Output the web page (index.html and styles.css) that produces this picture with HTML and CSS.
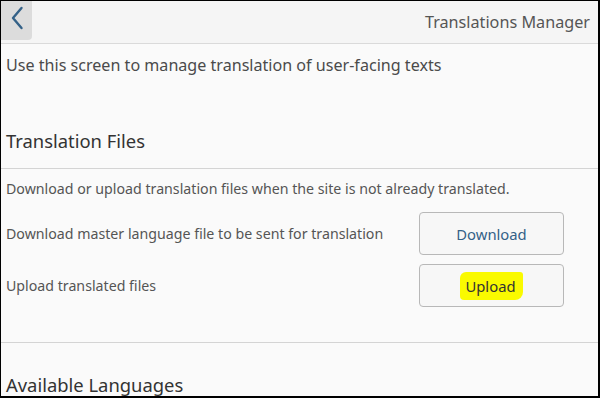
FILE: index.html
```html
<!DOCTYPE html>
<html>
<head>
<meta charset="utf-8">
<link rel="stylesheet" href="styles.css">
</head>
<body>
<div class="frame">
  <header class="bar">
    <button class="back" aria-label="Back">
      <svg width="14" height="24" viewBox="0 0 14 24"><path d="M11.5 2 L3 12 L11.5 22" fill="none" stroke="#346187" stroke-width="2.4" stroke-linecap="round" stroke-linejoin="round"/></svg>
    </button>
    <div class="title">Translations Manager</div>
  </header>
  <main class="content">
    <p class="intro">Use this screen to manage translation of user-facing texts</p>
    <section class="section">
      <h2 class="heading">Translation Files</h2>
      <div class="section-body">
        <p class="desc">Download or upload translation files when the site is not already translated.</p>
        <div class="row">
          <span class="label">Download master language file to be sent for translation</span>
          <button class="btn">Download</button>
        </div>
        <div class="row">
          <span class="label">Upload translated files</span>
          <button class="btn btn-upload"><span class="mark">Upload</span></button>
        </div>
      </div>
    </section>
    <section class="section">
      <h2 class="heading heading-next">Available Languages</h2>
    </section>
  </main>
</div>
</body>
</html>
```
FILE: styles.css
```css
html, body {
  margin: 0;
  padding: 0;
  background: #000;
}
body {
  width: 600px;
  height: 398px;
  overflow: hidden;
  font-family: "Noto Sans", "Open Sans", sans-serif;
}
.frame {
  box-sizing: border-box;
  width: 600px;
  height: 398px;
  margin: 0;
  border-left: 1px solid #000;
  border-right: 2px solid #000;
  border-top: 1px solid #000;
  border-bottom: 2px solid #000;
  background: #fafafa;
  overflow: hidden;
}
.bar {
  height: 42px;
  display: flex;
  align-items: flex-start;
  justify-content: space-between;
  background: #f5f5f5;
  border-bottom: 1px solid #dadada;
}
.back {
  width: 31px;
  height: 39px;
  border: none;
  padding: 0 0 6px 0;
  margin: 0;
  background: #dcdcdc;
  border-radius: 0 0 4px 0;
  display: flex;
  align-items: center;
  justify-content: center;
}
.title {
  font-size: 16.2px;
  color: #555;
  padding: 10px 8px 0 0;
}
.content {
  padding: 0 0 0 5px;
}
.intro {
  margin: 0;
  padding-top: 10px;
  font-size: 16.1px;
  color: #4a4a4a;
  line-height: 22px;
}
.section {
  margin-left: -5px;
}
.heading {
  margin: 0;
  padding: 52px 0 14px 5px;
  font-weight: normal;
  font-size: 18.4px;
  line-height: 26px;
  color: #333;
}
.heading-next {
  padding-top: 29px;
  padding-bottom: 0;
}
.section-body {
  border-top: 1px solid #d4d4d4;
  border-bottom: 1px solid #d4d4d4;
  padding: 10px 0 35px 5px;
}
.desc {
  margin: 0 0 13px 0;
  font-size: 14.2px;
  line-height: 20px;
  color: #555;
}
.row {
  display: flex;
  align-items: center;
  justify-content: space-between;
  padding-right: 34px;
  height: 43px;
  margin-bottom: 9px;
}
.row:last-child { margin-bottom: 0; }
.label {
  font-size: 14.2px;
  color: #555;
}
.btn {
  width: 145px;
  height: 43px;
  box-sizing: border-box;
  border: 1px solid #b8b8b8;
  border-radius: 4px;
  background: #f7f7f7;
  font-family: inherit;
  font-size: 14.8px;
  color: #346187;
  padding: 0;
}
.btn-upload { color: #333; }
.mark {
  display: inline-block;
  background: #fafa00;
  padding: 4px 7px 4px 5px;
  border-radius: 6px 3px 8px 4px;
  line-height: 20px;
}
```
